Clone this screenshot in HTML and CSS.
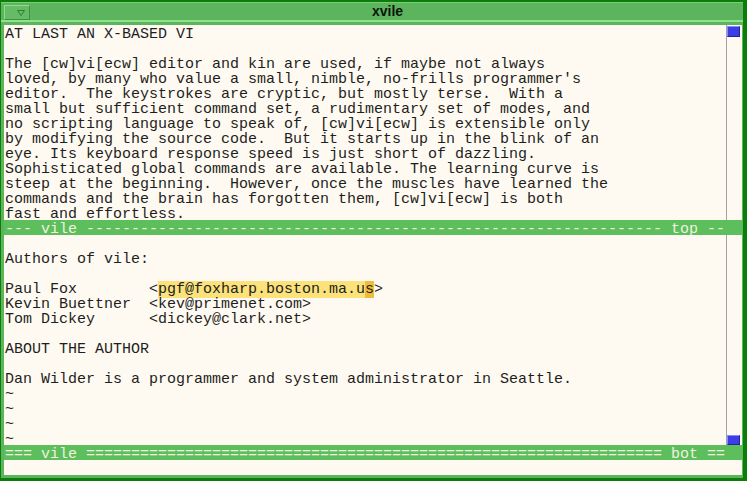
FILE: index.html
```html
<!DOCTYPE html>
<html>
<head>
<meta charset="utf-8">
<title>xvile</title>
<link rel="stylesheet" href="styles.css">
</head>
<body>
<div class="window">
  <div class="titlebar">
    <div class="menu-btn">
      <svg width="8" height="6" viewBox="0 0 8 6"><polygon points="0.5,0.5 7.5,0.5 4,5.5" fill="none" stroke="#2f7f2f" stroke-width="1"/></svg>
    </div>
    <div class="title">xvile</div>
  </div>
  <div class="body">
    <div class="pane top">
<pre class="text">AT LAST AN X-BASED VI

The [cw]vi[ecw] editor and kin are used, if maybe not always
loved, by many who value a small, nimble, no-frills programmer's
editor.  The keystrokes are cryptic, but mostly terse.  With a
small but sufficient command set, a rudimentary set of modes, and
no scripting language to speak of, [cw]vi[ecw] is extensible only
by modifying the source code.  But it starts up in the blink of an
eye. Its keyboard response speed is just short of dazzling.
Sophisticated global commands are available. The learning curve is
steep at the beginning.  However, once the muscles have learned the
commands and the brain has forgotten them, [cw]vi[ecw] is both
fast and effortless.</pre>
      <div class="scroll"><div class="thumb"></div></div>
    </div>
    <div class="modeline">--- vile ---------------------------------------------------------------- top --</div>
    <div class="pane bottom">
<pre class="text"><span class="blank"> </span>
Authors of vile:

Paul Fox        &lt;<span class="sel">pgf@foxharp.boston.ma.u</span><span class="cur">s</span>&gt;
Kevin Buettner  &lt;kev@primenet.com&gt;
Tom Dickey      &lt;dickey@clark.net&gt;

ABOUT THE AUTHOR

Dan Wilder is a programmer and system administrator in Seattle.
~
~
~
~</pre>
      <div class="scroll end"><div class="thumb"></div></div>
    </div>
    <div class="modeline">=== vile ================================================================ bot ==</div>
    <div class="message"></div>
  </div>
</div>
</body>
</html>
```
FILE: styles.css
```css
html, body {
  margin: 0;
  padding: 0;
}
body {
  width: 747px;
  height: 481px;
  overflow: hidden;
  background: #0a7d0a;
}
.window {
  box-sizing: border-box;
  width: 747px;
  height: 481px;
  display: flex;
  flex-direction: column;
  background: #5cb45c;
  border-style: solid;
  border-color: #0a7d0a;
  border-width: 2px 4px 3px 1px;
  padding: 0 1px 3px 3px;
}
.titlebar {
  box-sizing: border-box;
  height: 20px;
  flex: none;
  display: flex;
  align-items: flex-start;
  border-top: 1px solid #7ccc7c;
  border-bottom: 2px solid #8ee28e;
  margin: 0 -1px 3px -3px;
  padding-left: 3px;
  background: #5cb45c;
}
.menu-btn {
  box-sizing: border-box;
  width: 26px;
  height: 15px;
  margin-top: 2px;
  background: #66bb66;
  border-top: 1px solid #8fdc8f;
  border-left: 1px solid #8fdc8f;
  border-right: 1px solid #3f923f;
  border-bottom: 1px solid #3f923f;
  display: flex;
  align-items: center;
  justify-content: flex-end;
  padding-right: 4px;
}
.menu-btn svg {
  display: block;
}
.title {
  flex: 1;
  text-align: center;
  font: bold 14px/17px "Liberation Sans", Arial, sans-serif;
  color: #0c140c;
  padding-left: 2px;
}
.body {
  flex: 1;
  display: flex;
  flex-direction: column;
}
.pane {
  display: flex;
  flex: none;
}
.pane.top {
  height: 195px;
}
.pane.bottom {
  height: 210px;
}
.text {
  box-sizing: border-box;
  flex: 1;
  margin: 0;
  padding: 2px 0 0 1px;
  background: #fffaf1;
  color: #1e1e1e;
  font: 15px/15px "Liberation Mono", "DejaVu Sans Mono", monospace;
  white-space: pre;
  overflow: hidden;
}
.sel {
  background: #fbe27a;
}
.cur {
  background: #efbd3c;
}
.scroll {
  box-sizing: border-box;
  width: 16px;
  flex: none;
  border-left: 1px solid #a3a3a3;
  background: #fffaf1;
  display: flex;
  flex-direction: column;
}
.scroll.end {
  justify-content: flex-end;
}
.thumb {
  box-sizing: border-box;
  width: 13px;
  height: 11px;
  margin-top: 1px;
  background: #3d3de8;
  border-top: 1px solid #8a8aff;
  border-left: 1px solid #8a8aff;
  border-right: 1px solid #24249a;
  border-bottom: 1px solid #24249a;
}
.scroll.end .thumb {
  margin-top: 0;
  height: 10px;
}
.modeline {
  box-sizing: border-box;
  height: 15px;
  flex: none;
  background: #5cbf5c;
  color: #f3f0e0;
  font: 15px/15px "Liberation Mono", "DejaVu Sans Mono", monospace;
  white-space: pre;
  padding: 2px 0 0 1px;
  overflow: hidden;
}
.message {
  height: 15px;
  flex: none;
  background: #fffaf1;
}
```
